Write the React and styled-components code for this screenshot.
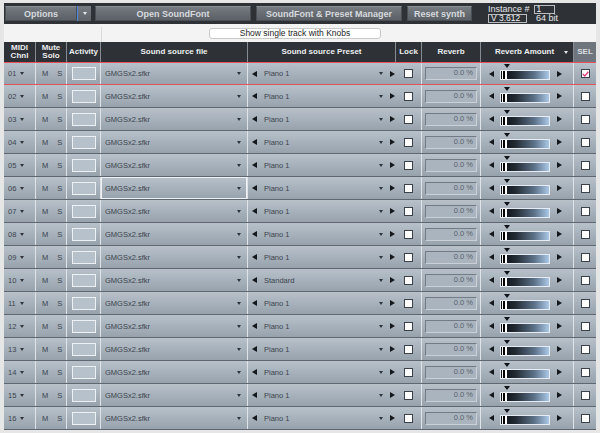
import React from 'react'
import styled, { createGlobalStyle, css } from 'styled-components'

const GlobalStyle = createGlobalStyle`
  html, body { margin: 0; padding: 0; }
  body {
    background: #e6e6e6;
    font-family: "Liberation Sans", Arial, sans-serif;
    overflow: hidden;
  }
`

const COLS = '31px 31px 34px 147px 148px 26px 59px 93px 23px'

const channels = Array.from({ length: 16 }, (_, i) => ({
  num: String(i + 1).padStart(2, '0'),
  preset: i === 9 ? 'Standard' : 'Piano 1',
}))

function App() {
  return (
    <>
      <GlobalStyle />
      <Page>
        <Toolbar>
          <ToolButton $w={72}>Options</ToolButton>
          <ArrowButton><Caret $light /></ArrowButton>
          <ToolButton $w={156} $gap={4}>Open SoundFont</ToolButton>
          <ToolButton $w={146} $gap={5}>SoundFont &amp; Preset Manager</ToolButton>
          <ToolButton $w={65} $gap={5}>Reset synth</ToolButton>
          <Instance>
            <InstLine>
              <span>Instance #</span>
              <InstBox $w={21}>1</InstBox>
            </InstLine>
            <InstLine>
              <InstBox $w={39}>V 3.612</InstBox>
              <span style={{ marginLeft: 5 }}>64 bit</span>
            </InstLine>
          </Instance>
        </Toolbar>

        <Strip>
          <StripLeft />
          <StripCenter>
            <KnobsButton>Show single track with Knobs</KnobsButton>
          </StripCenter>
        </Strip>

        <Header>
          <HeadCell $first>MIDI<br />Chnl</HeadCell>
          <HeadCell>Mute<br />Solo</HeadCell>
          <HeadCell>Activity</HeadCell>
          <HeadCell>Sound source file</HeadCell>
          <HeadCell>Sound source Preset</HeadCell>
          <HeadCell>Lock</HeadCell>
          <HeadCell>Reverb</HeadCell>
          <HeadCell>
            <Spacer />
            <span>Reverb Amount</span>
            <Spacer $end><Caret $light /></Spacer>
          </HeadCell>
          <HeadCell $sel>SEL</HeadCell>
        </Header>

        {channels.map((ch, i) => (
          <Row key={ch.num} $selected={i === 0}>
            <Cell $pad="0 0 0 4px">
              <span>{ch.num}</span>
              <Caret style={{ marginLeft: 4 }} />
            </Cell>
            <Cell $divider $pad="0 0 0 6px" $gap={9}>
              <span>M</span><span>S</span>
            </Cell>
            <Cell $divider $center>
              <ActivityBox />
            </Cell>
            <Cell $divider $pad="0 6px 0 4px" $focused={i === 5}>
              <span>GMGSx2.sfkr</span>
              <Spacer />
              <Caret />
            </Cell>
            <Cell $divider $pad="0 0 0 4px">
              <ArrowLeft />
              <span style={{ marginLeft: 7 }}>{ch.preset}</span>
              <Spacer />
              <Caret />
              <ArrowRight style={{ marginLeft: 7 }} />
            </Cell>
            <Cell $center>
              <CheckBox />
            </Cell>
            <Cell $divider $center>
              <ReverbBox>0.0 %</ReverbBox>
            </Cell>
            <Cell $divider $pad="0 0 0 8px">
              <ArrowLeft />
              <Track>
                <Marker />
                <Knob />
              </Track>
              <ArrowRight style={{ marginLeft: 7 }} />
            </Cell>
            <Cell $divider $center>
              <CheckBox>
                {i === 0 && (
                  <svg width="7" height="6" viewBox="0 0 7 6">
                    <path d="M0.8 3 L2.8 5 L6.4 0.8" fill="none" stroke="#e0407a" strokeWidth="1.4" />
                  </svg>
                )}
              </CheckBox>
            </Cell>
          </Row>
        ))}
      </Page>
    </>
  )
}

export default App

const Page = styled.div`
  width: 600px;
  height: 433px;
  box-sizing: border-box;
  padding: 3px 4px 0 4px;
  background: #e6e6e6;
  display: flex;
  flex-direction: column;
`

const Toolbar = styled.div`
  height: 21px;
  flex-shrink: 0;
  background: #2e3237;
  display: flex;
  align-items: center;
  padding-left: 1px;
`

const ToolButton = styled.div`
  width: ${p => p.$w}px;
  height: 15px;
  margin-left: ${p => p.$gap || 0}px;
  box-sizing: border-box;
  background: linear-gradient(#777c82, #666b71 55%, #5c6167);
  border: 1px solid #4a4f55;
  border-top-color: #8b9096;
  color: #d6dade;
  font-size: 9px;
  font-weight: bold;
  display: flex;
  align-items: center;
  justify-content: center;
  white-space: nowrap;
`

const ArrowButton = styled.div`
  width: 14px;
  height: 15px;
  box-sizing: border-box;
  background: linear-gradient(#777c82, #5d6268);
  border-left: 1px solid #4d86e0;
  display: flex;
  align-items: center;
  justify-content: center;
`

const Instance = styled.div`
  margin-left: 16px;
  display: flex;
  flex-direction: column;
  color: #e6e8ea;
  font-size: 9px;
  line-height: 9px;
`

const InstLine = styled.div`
  display: flex;
  align-items: center;
  height: 9px;
  gap: 4px;
`

const InstBox = styled.div`
  width: ${p => p.$w}px;
  height: 9px;
  box-sizing: border-box;
  border: 1px solid #b9bcc0;
  padding-left: 2px;
  font-size: 8.5px;
  line-height: 7px;
  color: #f2f2f2;
`

const Strip = styled.div`
  height: 18px;
  flex-shrink: 0;
  background: #f3f3f3;
  display: flex;
`

const StripLeft = styled.div`
  width: 97px;
  border-right: 1px solid #dadada;
  margin-top: 3px;
`

const StripCenter = styled.div`
  flex: 1;
  display: flex;
  align-items: center;
  padding-left: 107px;
`

const KnobsButton = styled.div`
  width: 172px;
  height: 11px;
  box-sizing: border-box;
  background: #ffffff;
  border: 1px solid #c9c9c9;
  border-radius: 3px;
  font-size: 8.5px;
  line-height: 9px;
  color: #1e1e1e;
  text-align: center;
`

const Header = styled.div`
  height: 20px;
  flex-shrink: 0;
  display: grid;
  grid-template-columns: ${COLS};
  background: #2e3237;
`

const HeadCell = styled.div`
  display: flex;
  align-items: center;
  justify-content: center;
  text-align: center;
  font-size: 8px;
  font-weight: bold;
  line-height: 8.5px;
  border-left: ${p => (p.$first ? 'none' : '1px solid #858b93')};
  background: ${p => (p.$sel ? '#6f757c' : 'transparent')};
  color: ${p => (p.$sel ? '#d9dde1' : '#eceef0')};
`

const Spacer = styled.div`
  flex: 1;
  display: flex;
  justify-content: ${p => (p.$end ? 'flex-end' : 'flex-start')};
  padding-right: ${p => (p.$end ? '5px' : '0')};
`

const Row = styled.div`
  height: 23px;
  flex-shrink: 0;
  box-sizing: border-box;
  display: grid;
  grid-template-columns: ${COLS};
  background: linear-gradient(#b8c1ca, #a9b3bd 45%, #98a2ad);
  border-bottom: 1px solid #5f6770;
  color: #3b444e;
  font-size: 7.5px;
  ${p =>
    p.$selected &&
    css`
      border-top: 1px solid #e4525c;
      border-bottom: 1px solid #e4525c;
    `}
`

const Cell = styled.div`
  display: flex;
  align-items: center;
  justify-content: ${p => (p.$center ? 'center' : 'flex-start')};
  gap: ${p => p.$gap || 0}px;
  padding: ${p => p.$pad || '0'};
  border-left: ${p => (p.$divider ? '1px solid #e0e4e8' : 'none')};
  box-shadow: ${p => (p.$focused ? 'inset 0 0 0 1px #eef1f4' : 'none')};
  white-space: nowrap;
  min-width: 0;
`

const Caret = styled.span`
  display: inline-block;
  width: 0;
  height: 0;
  border-left: 2.5px solid transparent;
  border-right: 2.5px solid transparent;
  border-top: 3px solid ${p => (p.$light ? '#e6e8ea' : '#2d343b')};
`

const ArrowLeft = styled.span`
  display: inline-block;
  width: 0;
  height: 0;
  border-top: 3px solid transparent;
  border-bottom: 3px solid transparent;
  border-right: 5px solid #14181c;
`

const ArrowRight = styled.span`
  display: inline-block;
  width: 0;
  height: 0;
  border-top: 3px solid transparent;
  border-bottom: 3px solid transparent;
  border-left: 5px solid #14181c;
`

const ActivityBox = styled.div`
  width: 24px;
  height: 13px;
  box-sizing: border-box;
  background: #b6c1cc;
  border: 1px solid #eef1f4;
`

const CheckBox = styled.div`
  width: 9px;
  height: 9px;
  box-sizing: border-box;
  background: #ffffff;
  border: 1px solid #3a4149;
  display: flex;
  align-items: center;
  justify-content: center;
`

const ReverbBox = styled.div`
  width: 52px;
  height: 13px;
  box-sizing: border-box;
  background: #aab4bf;
  border: 1px solid #737c86;
  border-right-color: #c9d0d7;
  border-bottom-color: #c9d0d7;
  color: #59626c;
  font-size: 7.5px;
  text-align: right;
  padding-right: 3px;
  line-height: 10px;
`

const Track = styled.div`
  position: relative;
  width: 50px;
  height: 10px;
  margin-left: 6px;
  margin-top: 3px;
  box-sizing: border-box;
  border: 1px solid #e6ecf2;
  background: linear-gradient(to right, #0b0e12 0%, #222a33 30%, #5d738a 70%, #abc8e6 100%);
`

const Knob = styled.div`
  position: absolute;
  left: 1px;
  top: 0;
  bottom: 0;
  width: 5px;
  background: linear-gradient(to right, #ffffff 0 1px, #000000 1px 3px, #ffffff 3px);
`

const Marker = styled.div`
  position: absolute;
  left: 3px;
  top: -7px;
  width: 0;
  height: 0;
  border-left: 3.5px solid transparent;
  border-right: 3.5px solid transparent;
  border-top: 4px solid #101317;
`
